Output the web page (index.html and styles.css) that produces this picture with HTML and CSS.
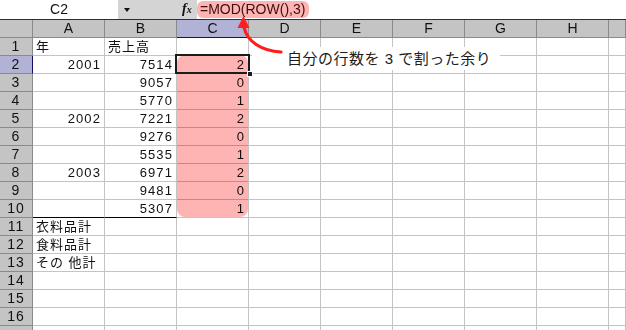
FILE: index.html
```html
<!DOCTYPE html>
<html lang="ja">
 <head>
  <meta charset="utf-8">
  <title>MOD(ROW(),3)</title>
  <link rel="stylesheet" href="styles.css">
 </head>
 <body>
 <div id="book">
  <div class="fbar">
   <div class="namebox">C2</div>
   <div class="tools"><span class="drop"></span><span class="fx">f<small>x</small></span></div>
   <div class="formula"><span class="fhi">=MOD(ROW(),3)</span></div>
  </div>

  <div class="sheet">
   <div class="hd corner"></div><div class="hd">A</div><div class="hd">B</div><div class="hd sel-c">C</div><div class="hd">D</div><div class="hd">E</div><div class="hd">F</div><div class="hd">G</div><div class="hd">H</div><div class="hd"></div>

   <div class="rh">1</div><div class="c">年</div><div class="c">売上高</div><div class="c"></div><div class="c"></div><div class="c"></div><div class="c"></div><div class="c"></div><div class="c"></div><div class="c"></div>
   <div class="rh sel-r">2</div><div class="c num">2001</div><div class="c num">7514</div><div class="c num">2</div><div class="c"></div><div class="c"></div><div class="c"></div><div class="c"></div><div class="c"></div><div class="c"></div>
   <div class="rh">3</div><div class="c"></div><div class="c num">9057</div><div class="c num">0</div><div class="c"></div><div class="c"></div><div class="c"></div><div class="c"></div><div class="c"></div><div class="c"></div>
   <div class="rh">4</div><div class="c"></div><div class="c num">5770</div><div class="c num">1</div><div class="c"></div><div class="c"></div><div class="c"></div><div class="c"></div><div class="c"></div><div class="c"></div>
   <div class="rh">5</div><div class="c num">2002</div><div class="c num">7221</div><div class="c num">2</div><div class="c"></div><div class="c"></div><div class="c"></div><div class="c"></div><div class="c"></div><div class="c"></div>
   <div class="rh">6</div><div class="c"></div><div class="c num">9276</div><div class="c num">0</div><div class="c"></div><div class="c"></div><div class="c"></div><div class="c"></div><div class="c"></div><div class="c"></div>
   <div class="rh">7</div><div class="c"></div><div class="c num">5535</div><div class="c num">1</div><div class="c"></div><div class="c"></div><div class="c"></div><div class="c"></div><div class="c"></div><div class="c"></div>
   <div class="rh">8</div><div class="c num">2003</div><div class="c num">6971</div><div class="c num">2</div><div class="c"></div><div class="c"></div><div class="c"></div><div class="c"></div><div class="c"></div><div class="c"></div>
   <div class="rh">9</div><div class="c"></div><div class="c num">9481</div><div class="c num">0</div><div class="c"></div><div class="c"></div><div class="c"></div><div class="c"></div><div class="c"></div><div class="c"></div>
   <div class="rh">10</div><div class="c total"></div><div class="c num total">5307</div><div class="c num">1</div><div class="c"></div><div class="c"></div><div class="c"></div><div class="c"></div><div class="c"></div><div class="c"></div>
   <div class="rh">11</div><div class="c">衣料品計</div><div class="c"></div><div class="c"></div><div class="c"></div><div class="c"></div><div class="c"></div><div class="c"></div><div class="c"></div><div class="c"></div>
   <div class="rh">12</div><div class="c">食料品計</div><div class="c"></div><div class="c"></div><div class="c"></div><div class="c"></div><div class="c"></div><div class="c"></div><div class="c"></div><div class="c"></div>
   <div class="rh">13</div><div class="c">その 他計</div><div class="c"></div><div class="c"></div><div class="c"></div><div class="c"></div><div class="c"></div><div class="c"></div><div class="c"></div><div class="c"></div>
   <div class="rh">14</div><div class="c"></div><div class="c"></div><div class="c"></div><div class="c"></div><div class="c"></div><div class="c"></div><div class="c"></div><div class="c"></div><div class="c"></div>
   <div class="rh">15</div><div class="c"></div><div class="c"></div><div class="c"></div><div class="c"></div><div class="c"></div><div class="c"></div><div class="c"></div><div class="c"></div><div class="c"></div>
   <div class="rh">16</div><div class="c"></div><div class="c"></div><div class="c"></div><div class="c"></div><div class="c"></div><div class="c"></div><div class="c"></div><div class="c"></div><div class="c"></div>
   <div class="rh"></div><div class="c"></div><div class="c"></div><div class="c"></div><div class="c"></div><div class="c"></div><div class="c"></div><div class="c"></div><div class="c"></div><div class="c"></div>
  </div>

  <!-- marks drawn over the sheet -->
  <div class="mark"></div>
  <div class="active"><span class="handle"></span></div>
  <div class="note">自分の行数を 3 で割った余り</div>
  <svg class="arrow" width="60" height="50" viewBox="230 10 60 50">
   <path d="M281,52 C262,51 247,42 244,27" fill="none" stroke="#ff1e1e" stroke-width="3.2" stroke-linecap="round"/>
   <polygon points="243.5,16 237.5,28 249.5,28" fill="#ff1e1e"/>
  </svg>
 </div>
 </body>
</html>
```

FILE: styles.css
```css
* { margin: 0; padding: 0; box-sizing: border-box; }
body { background: white; color: #111; font-family: "Liberation Sans", "Noto Sans CJK JP", sans-serif; font-size: 13px; overflow: hidden; }
#book { position: relative; width: 626px; height: 330px; overflow: hidden; }

/* formula bar */
.fbar { display: flex; height: 20px; border-bottom: 1px solid #303030; }
.namebox { width: 118px; background: white; text-align: center; font-size: 14px; line-height: 18px; }
.tools { width: 79px; background: #d4d4d4; display: flex; align-items: center; }
.drop { width: 0; height: 0; margin-left: 6px; border-left: 3.5px solid transparent; border-right: 3.5px solid transparent; border-top: 4px solid #111; }
.fx { margin-left: 52px; font-family: "Liberation Serif", serif; font-style: italic; font-weight: bold; font-size: 14px; line-height: 18px; }
.fx small { font-size: 10px; }
.formula { flex: 1; background: white; padding-top: 1px; }
.fhi { display: inline-block; height: 17px; padding: 0 4px 0 3px; background: #ffb4b4; border-radius: 6px; font-size: 14px; line-height: 17px; color: #3a1010; }

/* grid */
.sheet { display: grid; grid-template-columns: 33px repeat(8, 72px) 1fr; grid-auto-rows: 18px; }
.hd, .rh, .c { border-right: 1px solid #c4c4c4; border-bottom: 1px solid #c4c4c4; line-height: 17px; white-space: nowrap; }
.hd { background: #c4c4c4; border-color: #8a8a8a; text-align: center; font-size: 14px; }
.rh { background: #c4c4c4; border-color: #8a8a8a; text-align: center; font-size: 14px; letter-spacing: 1px; }
.sel-c { background: #b2b2d6; border-bottom-color: #10106a; }
.sel-r { background: #b2b2d6; border-right-color: #10106a; }
.c { padding: 0 3px; font-size: 13px; letter-spacing: 1px; }
.num { text-align: right; padding-right: 3px; letter-spacing: 1.1px; }
.total { border-bottom-color: #000; }

/* overlays */
.mark { position: absolute; left: 177px; top: 55px; width: 71px; height: 162px; background: #ffb4b4; border-radius: 8px; mix-blend-mode: multiply; }
.active { position: absolute; left: 175px; top: 54px; width: 75px; height: 20px; border: 2px solid #1c1c1c; }
.handle { position: absolute; right: -5px; bottom: -5px; width: 6px; height: 6px; background: #1c1c1c; border: 1px solid white; }
.note { position: absolute; left: 252px; top: 47px; width: 248px; height: 23px; background: white; padding-left: 35px; font-size: 15px; line-height: 23px; letter-spacing: 0.5px; color: #1c1c1c; }
.arrow { position: absolute; left: 230px; top: 10px; }
```
